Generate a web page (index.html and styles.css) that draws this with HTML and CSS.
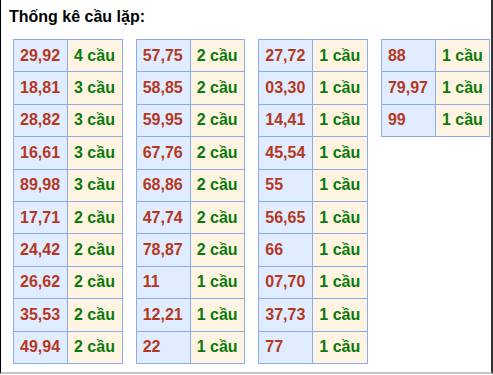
FILE: index.html
```html
<!DOCTYPE html>
<html lang="vi">
<head>
<meta charset="utf-8">
<link rel="stylesheet" href="styles.css">
</head>
<body>
<div class="frame">
  <div class="title">Thống kê cầu lặp:</div>
  <div class="tables">
    <div class="stat">
      <div class="num">29,92</div><div class="cnt">4 cầu</div>
      <div class="num">18,81</div><div class="cnt">3 cầu</div>
      <div class="num">28,82</div><div class="cnt">3 cầu</div>
      <div class="num">16,61</div><div class="cnt">3 cầu</div>
      <div class="num">89,98</div><div class="cnt">3 cầu</div>
      <div class="num">17,71</div><div class="cnt">2 cầu</div>
      <div class="num">24,42</div><div class="cnt">2 cầu</div>
      <div class="num">26,62</div><div class="cnt">2 cầu</div>
      <div class="num">35,53</div><div class="cnt">2 cầu</div>
      <div class="num">49,94</div><div class="cnt">2 cầu</div>
    </div>
    <div class="stat">
      <div class="num">57,75</div><div class="cnt">2 cầu</div>
      <div class="num">58,85</div><div class="cnt">2 cầu</div>
      <div class="num">59,95</div><div class="cnt">2 cầu</div>
      <div class="num">67,76</div><div class="cnt">2 cầu</div>
      <div class="num">68,86</div><div class="cnt">2 cầu</div>
      <div class="num">47,74</div><div class="cnt">2 cầu</div>
      <div class="num">78,87</div><div class="cnt">2 cầu</div>
      <div class="num">11</div><div class="cnt">1 cầu</div>
      <div class="num">12,21</div><div class="cnt">1 cầu</div>
      <div class="num">22</div><div class="cnt">1 cầu</div>
    </div>
    <div class="stat">
      <div class="num">27,72</div><div class="cnt">1 cầu</div>
      <div class="num">03,30</div><div class="cnt">1 cầu</div>
      <div class="num">14,41</div><div class="cnt">1 cầu</div>
      <div class="num">45,54</div><div class="cnt">1 cầu</div>
      <div class="num">55</div><div class="cnt">1 cầu</div>
      <div class="num">56,65</div><div class="cnt">1 cầu</div>
      <div class="num">66</div><div class="cnt">1 cầu</div>
      <div class="num">07,70</div><div class="cnt">1 cầu</div>
      <div class="num">37,73</div><div class="cnt">1 cầu</div>
      <div class="num">77</div><div class="cnt">1 cầu</div>
    </div>
    <div class="stat">
      <div class="num">88</div><div class="cnt">1 cầu</div>
      <div class="num">79,97</div><div class="cnt">1 cầu</div>
      <div class="num">99</div><div class="cnt">1 cầu</div>
    </div>
  </div>
</div>
</body>
</html>
```
FILE: styles.css
```css
html, body {
  margin: 0;
  padding: 0;
  background: #ffffff;
}
body {
  font-family: "Liberation Sans", Arial, sans-serif;
}
.frame {
  box-sizing: border-box;
  width: 493px;
  height: 374px;
  border-left: 1px solid #000000;
  border-right: 2px solid #333333;
  border-bottom: 2px solid #c4c4c4;
}
.title {
  font-size: 16px;
  font-weight: bold;
  line-height: 18px;
  color: #000000;
  padding: 8px 0 0 8px;
  height: 39px;
  box-sizing: border-box;
}
.tables {
  display: flex;
  align-items: flex-start;
  gap: 13.17px;
  padding-left: 12px;
}
.stat {
  box-sizing: border-box;
  width: 109.5px;
  display: grid;
  grid-template-columns: 54px 1fr;
  grid-auto-rows: 32.4px;
  border-top: 1px solid #8cabef;
  border-left: 1px solid #8cabef;
}
.stat > div {
  box-sizing: border-box;
  border-right: 1px solid #8cabef;
  border-bottom: 1px solid #8cabef;
  font-size: 16px;
  font-weight: bold;
  white-space: nowrap;
  display: flex;
  align-items: center;
  padding-left: 6px;
}
.stat .num {
  background: #e0ecff;
  color: #b5381e;
}
.stat .cnt {
  background: #fff4e2;
  color: #0a7a0a;
}
```
